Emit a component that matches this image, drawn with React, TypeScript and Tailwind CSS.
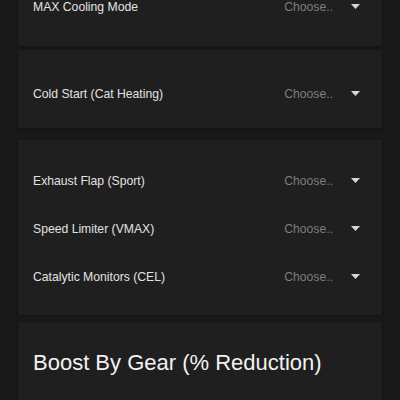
import { ReactNode } from "react";

const font = { fontFamily: '"Liberation Sans", Arial, Helvetica, sans-serif' };

function Caret() {
  return (
    <svg width="9" height="5" viewBox="0 0 9 5" className="shrink-0" aria-hidden="true">
      <path d="M0 0 H9 L4.5 5 Z" fill="#d6d6d6" />
    </svg>
  );
}

function SelectRow({ label }: { label: string }) {
  return (
    <div className="flex h-12 items-center justify-between pl-[15px] pr-[22px] pt-[2px]">
      <span className="text-[12.2px] text-[#e2e2e2]">{label}</span>
      <div className="flex items-center gap-[18px]">
        <span className="text-[12.2px] text-[#7d7d7d]">Choose..</span>
        <Caret />
      </div>
    </div>
  );
}

function Card({ className, children }: { className?: string; children: ReactNode }) {
  return (
    <section className={`mx-[18px] bg-[#1f1f1f] shadow-[0_1px_3px_rgba(0,0,0,0.3)] ${className ?? ""}`}>
      {children}
    </section>
  );
}

export default function App() {
  return (
    <div className="h-[400px] w-[400px] overflow-hidden bg-[#191919]" style={font}>
      <Card className="h-[46px] overflow-hidden">
        <div className="-mt-[18px]">
          <SelectRow label="MAX Cooling Mode" />
        </div>
      </Card>

      <Card className="mt-[4px] pb-[11px] pt-[19px]">
        <SelectRow label="Cold Start (Cat Heating)" />
      </Card>

      <Card className="mt-[12px] pb-[15px] pt-[16px]">
        <SelectRow label="Exhaust Flap (Sport)" />
        <SelectRow label="Speed Limiter (VMAX)" />
        <SelectRow label="Catalytic Monitors (CEL)" />
      </Card>

      <Card className="mt-[7px] h-[120px] px-[15px] pt-[27px]">
        <h2 className="text-[22px] font-light leading-[28px] text-[#f2f2f2]">
          Boost By Gear (% Reduction)
        </h2>
      </Card>
    </div>
  );
}
